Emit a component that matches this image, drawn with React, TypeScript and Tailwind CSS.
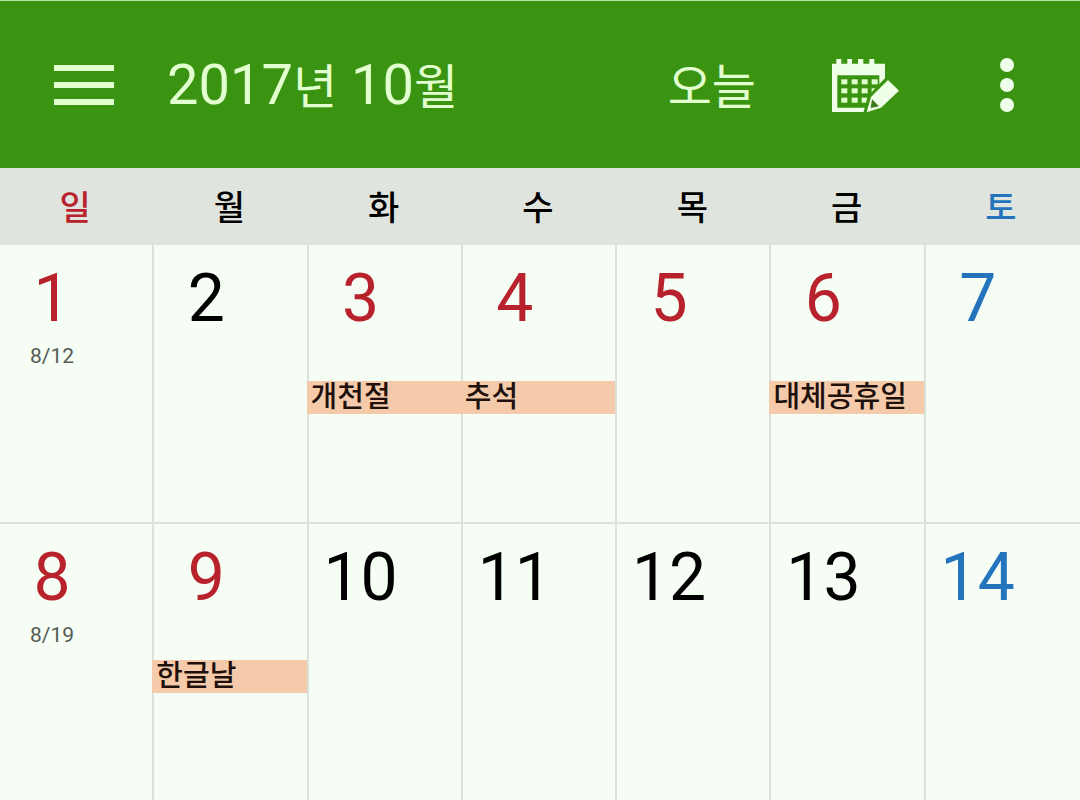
type Tone = "red" | "black" | "blue";

interface Day {
  n: number;
  tone: Tone;
  lunar?: string;
  event?: string;
}

const toneClass: Record<Tone, string> = {
  red: "text-[#b8222c]",
  black: "text-black",
  blue: "text-[#2474bd]",
};

const weekdays: { label: string; tone: Tone }[] = [
  { label: "일", tone: "red" },
  { label: "월", tone: "black" },
  { label: "화", tone: "black" },
  { label: "수", tone: "black" },
  { label: "목", tone: "black" },
  { label: "금", tone: "black" },
  { label: "토", tone: "blue" },
];

const weeks: Day[][] = [
  [
    { n: 1, tone: "red", lunar: "8/12" },
    { n: 2, tone: "black" },
    { n: 3, tone: "red", event: "개천절" },
    { n: 4, tone: "red", event: "추석" },
    { n: 5, tone: "red" },
    { n: 6, tone: "red", event: "대체공휴일" },
    { n: 7, tone: "blue" },
  ],
  [
    { n: 8, tone: "red", lunar: "8/19" },
    { n: 9, tone: "red", event: "한글날" },
    { n: 10, tone: "black" },
    { n: 11, tone: "black" },
    { n: 12, tone: "black" },
    { n: 13, tone: "black" },
    { n: 14, tone: "blue" },
  ],
];

function MenuIcon() {
  return (
    <svg viewBox="0 0 60 40" className="h-10 w-[60px]" fill="#e2ffd0" aria-hidden="true">
      <rect width="60" height="6" />
      <rect y="17" width="60" height="6" />
      <rect y="34" width="60" height="6" />
    </svg>
  );
}

function CalendarEditIcon() {
  const columns = [64, 95, 125, 155];
  const rows = [97, 124, 152];
  return (
    <svg viewBox="33 30 210 168" className="h-14 w-[70px]" aria-hidden="true">
      <path
        d="M36 50H49V36H64V50H82V36H96V50H114V36H130V50H148V36H163V50H195V195H36Z"
        fill="#f0ffe8"
      />
      <path d="M52 85H178V182H52Z" fill="#3b9411" />
      {rows.map((y) =>
        columns.map((x) => (
          <rect key={`${x}-${y}`} x={x} y={y} width="18" height="15" fill="#e2ffd0" />
        )),
      )}
      <path d="M204 84L250 131L210 198H130L143 148Z" fill="#3b9411" />
      <path d="M204 99L237 131L183 182L140 196L153 150Z" fill="#f0ffe8" />
      <path d="M156 157L177 178L152 183Z" fill="#3b7a1c" />
    </svg>
  );
}

function MoreIcon() {
  return (
    <svg viewBox="0 0 14 54" className="h-[54px] w-[14px]" fill="#f0ffec" aria-hidden="true">
      <circle cx="7" cy="7" r="7" />
      <circle cx="7" cy="27" r="7" />
      <circle cx="7" cy="47" r="7" />
    </svg>
  );
}

export default function App() {
  return (
    <main className="min-h-screen bg-[#f5fdf4] font-['Roboto','Noto_Sans_CJK_KR',sans-serif]">
      <header className="flex h-[168px] items-center border-t border-[#b9e09f] bg-[#3b9411] pr-[66px] pl-[54px] text-[#e2ffd0]">
        <button type="button" aria-label="메뉴">
          <MenuIcon />
        </button>
        <h1 className="ml-[53px] flex-1 text-[56px] leading-[64px] font-normal whitespace-nowrap">
          2017<span className="text-5xl">년</span> 10<span className="text-5xl">월</span>
        </h1>
        <button type="button" className="pt-1.5 text-5xl font-normal">
          오늘
        </button>
        <button type="button" aria-label="일정 추가" className="ml-[75px]">
          <CalendarEditIcon />
        </button>
        <button type="button" aria-label="더보기" className="ml-[99px]">
          <MoreIcon />
        </button>
      </header>

      <table className="w-full table-fixed border-separate border-spacing-0">
        <thead className="bg-[#dfe5de]">
          <tr>
            {weekdays.map((d) => (
              <th
                key={d.label}
                scope="col"
                className={`h-[77px] p-0 pt-0.5 pr-1 text-center text-[34px] leading-10 font-medium ${toneClass[d.tone]}`}
              >
                {d.label}
              </th>
            ))}
          </tr>
        </thead>
        <tbody>
          {weeks.map((week, w) => (
            <tr key={week[0].n} className={w === 0 ? "h-[279px]" : "h-[276px]"}>
              {week.map((day, i) => (
                <td
                  key={day.n}
                  className={`border-[#dbe2da] p-0 align-top ${i < 6 ? "border-r-2" : ""} ${w === 0 ? "border-b-2" : ""}`}
                >
                  <div className="w-[104px] pt-4 text-center">
                    <div className={`text-[66px] leading-[76px] ${toneClass[day.tone]}`}>{day.n}</div>
                    <div className="h-[44px] pt-[7px] text-[21px] leading-6 text-[#555b55]">{day.lunar}</div>
                  </div>
                  {day.event && (
                    <a
                      href={`#day-${day.n}`}
                      className="-ml-0.5 block h-[33px] bg-[#f5caaa] pl-1 text-[29px] leading-8 font-medium whitespace-nowrap text-[#20100c]"
                    >
                      {day.event}
                    </a>
                  )}
                </td>
              ))}
            </tr>
          ))}
        </tbody>
      </table>
    </main>
  );
}
